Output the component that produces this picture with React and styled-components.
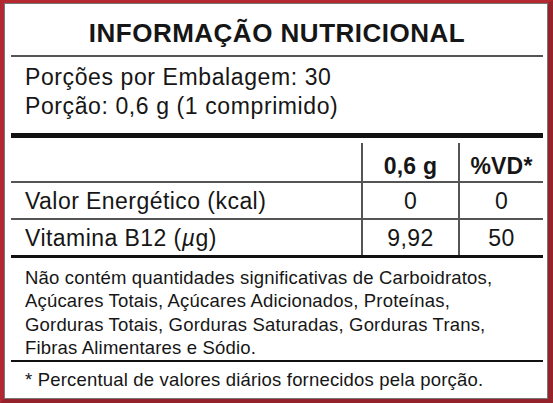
import React from 'react';
import styled, { createGlobalStyle } from 'styled-components';

const GlobalStyle = createGlobalStyle`
  html, body {
    margin: 0;
    padding: 0;
    background: #fff;
  }

  body {
    font-family: "Liberation Sans", Arial, Helvetica, sans-serif;
    color: #161616;
  }
`;

const Frame = styled.div`
  box-sizing: border-box;
  width: 553px;
  height: 403px;
  border-style: solid;
  border-width: 3px 5px 4px 4px;
  border-color: #b5282f #96222b #93222a #b32830;
  background: #fff;
  display: flex;
`;

const Panel = styled.div`
  flex: 1;
  border: 1px solid #777;
  padding: 0 4px 0 6px;
  display: flex;
  flex-direction: column;
`;

const Title = styled.h1`
  margin: 0;
  padding: 14px 0 7px;
  font-size: 26px;
  line-height: 30px;
  font-weight: 700;
  letter-spacing: 0.5px;
  text-align: center;
`;

const Rule = styled.hr`
  margin: 0;
  border: 0;
  height: ${p => p.$size}px;
  background: ${p => p.$color || '#111'};
`;

const Serving = styled.div`
  padding: 6px 0 12px 14px;
  font-size: 23px;
  line-height: 29px;
  letter-spacing: 0.6px;
`;

const Table = styled.div`
  display: grid;
  grid-template-columns: 350px 97px 1fr;
  margin-top: 5px;
`;

const Cell = styled.div`
  box-sizing: border-box;
  height: ${p => p.$height}px;
  display: flex;
  align-items: ${p => (p.$head ? 'flex-start' : 'center')};
  justify-content: ${p => (p.$num ? 'center' : 'flex-start')};
  padding: ${p => (p.$head ? '10px' : '0')} 0 0 ${p => (p.$num ? '0' : '14px')};
  border-left: ${p => (p.$num ? '2px solid #555' : '0')};
  border-bottom: ${p => (p.$last ? '0' : '2px solid #555')};
  font-size: 23px;
  line-height: 26px;
  letter-spacing: ${p => (p.$head ? '0.2px' : '0.45px')};
  font-weight: ${p => (p.$head ? 700 : 400)};
`;

const Notes = styled.div`
  padding: ${p => p.$top}px 0 0 14px;
  font-size: 18.5px;
  line-height: 23.4px;
  letter-spacing: 0.18px;
`;

const Line = styled.span`
  display: block;
  white-space: nowrap;
`;

const rows = [
  { label: 'Valor Energético (kcal)', qty: '0', vd: '0', height: 37 },
  { label: <>Vitamina B12 (<i>µ</i>g)</>, qty: '9,92', vd: '50', height: 35, last: true },
];

const notes = [
  'Não contém quantidades significativas de Carboidratos,',
  'Açúcares Totais, Açúcares Adicionados, Proteínas,',
  'Gorduras Totais, Gorduras Saturadas, Gorduras Trans,',
  'Fibras Alimentares e Sódio.',
];

export default function App() {
  return (
    <>
      <GlobalStyle />
      <Frame>
        <Panel>
          <Title>INFORMAÇÃO NUTRICIONAL</Title>
          <Rule $size={2} $color="#555" />
          <Serving>
            <Line>Porções por Embalagem: 30</Line>
            <Line>Porção: 0,6 g (1 comprimido)</Line>
          </Serving>
          <Rule $size={5} />

          <Table>
            <Cell $height={40} $head />
            <Cell $height={40} $head $num>0,6 g</Cell>
            <Cell $height={40} $head $num>%VD*</Cell>
            {rows.map((r, i) => (
              <React.Fragment key={i}>
                <Cell $height={r.height} $last={r.last}>{r.label}</Cell>
                <Cell $height={r.height} $last={r.last} $num>{r.qty}</Cell>
                <Cell $height={r.height} $last={r.last} $num>{r.vd}</Cell>
              </React.Fragment>
            ))}
          </Table>

          <Rule $size={3} />
          <Notes $top={8}>
            {notes.map(n => <Line key={n}>{n}</Line>)}
          </Notes>
          <Rule $size={2} />
          <Notes $top={6}>
            <Line>* Percentual de valores diários fornecidos pela porção.</Line>
          </Notes>
        </Panel>
      </Frame>
    </>
  );
}
